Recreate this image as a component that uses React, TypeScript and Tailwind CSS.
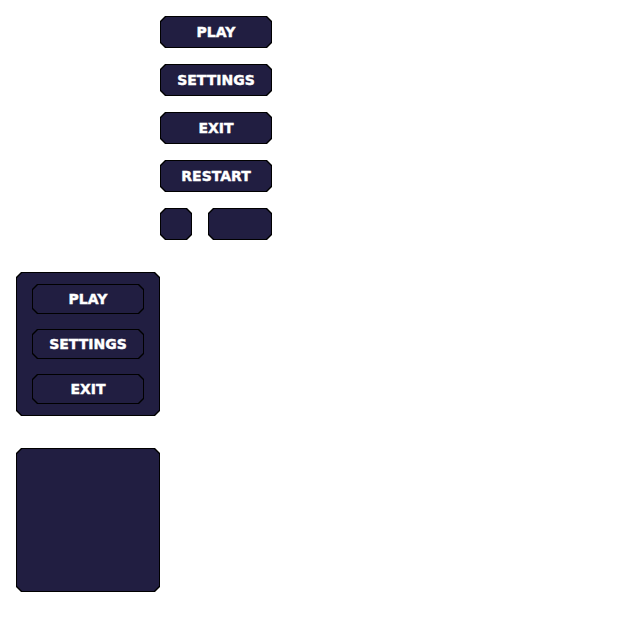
const clip =
  '[clip-path:polygon(5px_0,calc(100%_-_5px)_0,100%_5px,100%_calc(100%_-_5px),calc(100%_-_5px)_100%,5px_100%,0_calc(100%_-_5px),0_5px)]'

const font = { fontFamily: '"DejaVu Sans", Verdana, sans-serif' }

function Frame({ className, children }: { className: string; children?: React.ReactNode }) {
  return (
    <div className={`bg-black p-px ${clip} ${className}`}>
      <div className={`h-full w-full bg-[#211e41] ${clip} flex items-center justify-center`}>{children}</div>
    </div>
  )
}

function Label({ text }: { text: string }) {
  return (
    <span className="text-[14px] leading-none font-bold text-white [-webkit-text-stroke:0.4px_white]" style={font}>
      {text}
    </span>
  )
}

export default function App() {
  return (
    <div className="min-h-screen bg-white p-4">
      <div className="ml-[144px] flex flex-col gap-4">
        <Frame className="h-8 w-28">
          <Label text="PLAY" />
        </Frame>
        <Frame className="h-8 w-28">
          <Label text="SETTINGS" />
        </Frame>
        <Frame className="h-8 w-28">
          <Label text="EXIT" />
        </Frame>
        <Frame className="h-8 w-28">
          <Label text="RESTART" />
        </Frame>
        <div className="flex gap-4">
          <Frame className="h-8 w-8" />
          <Frame className="h-8 w-16" />
        </div>
      </div>

      <div className="mt-8 flex flex-col gap-8">
        {/* menu panel */}
        <div className={`h-36 w-36 bg-black p-px ${clip}`}>
          <div className={`h-full w-full bg-[#211e41] ${clip} flex flex-col gap-[15px] px-[15px] py-[11px]`}>
            {['PLAY', 'SETTINGS', 'EXIT'].map((label) => (
              <Frame key={label} className="h-[30px] w-full">
                <Label text={label} />
              </Frame>
            ))}
          </div>
        </div>
        <Frame className="h-36 w-36" />
      </div>
    </div>
  )
}
